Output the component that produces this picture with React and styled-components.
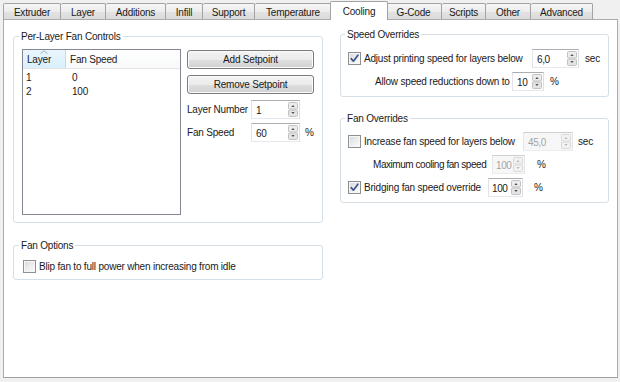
import React from "react";
import styled, { createGlobalStyle, css } from "styled-components";

const GlobalStyle = createGlobalStyle`
  html, body { margin: 0; padding: 0; background: #f0f0f0; }
  body {
    font-family: "Liberation Sans", Arial, sans-serif;
    font-size: 10px;
    letter-spacing: -0.2px;
    color: #1a1a1a;
  }
  * { box-sizing: border-box; }
`;

const Window = styled.div`
  width: 620px;
  height: 382px;
  padding: 0 2px 4px 3px;
  display: flex;
  flex-direction: column;
  background: #f0f0f0;
`;

const TabBar = styled.div`
  flex: none;
  height: 19px;
  display: flex;
  align-items: flex-end;
  position: relative;
  z-index: 1;
`;

const Tab = styled.div`
  flex: none;
  width: ${(p) => p.$w}px;
  height: 16px;
  display: flex;
  align-items: center;
  justify-content: center;
  padding-top: 2px;
  border: 1px solid #a3a3a3;
  border-bottom: none;
  border-left-width: 0;
  border-radius: 2px 2px 0 0;
  background: linear-gradient(#f6f6f6, #ececec 50%, #e2e2e2 51%, #dcdcdc);
  white-space: nowrap;
  &:first-child { border-left-width: 1px; }
  ${(p) =>
    p.$active &&
    css`
      width: ${p.$w + 4}px;
      height: 19px;
      margin: 0 -2px -1px;
      padding-top: 0;
      border-left-width: 1px;
      background: #fff;
      position: relative;
      z-index: 2;
    `}
`;

const Pane = styled.div`
  flex: 1;
  background: #fff;
  border: 1px solid #acacac;
  border-bottom-color: #a0a0a0;
  display: grid;
  grid-template-columns: 310px 269px;
  column-gap: 17px;
  align-items: start;
  padding: 0 8px 0 9px;
`;

const Column = styled.div`
  display: flex;
  flex-direction: column;
  gap: ${(p) => p.$gap}px;
  padding-top: ${(p) => p.$top}px;
`;

const Group = styled.fieldset`
  margin: 0;
  min-width: 0;
  border: 1px solid #d5dfe5;
  border-radius: 3px;
  padding: ${(p) => p.$pt}px 0 ${(p) => p.$pb}px 0;
`;

const Legend = styled.legend`
  margin-left: ${(p) => p.$x}px;
  padding: 0 2px;
  height: 11px;
  line-height: 11px;
`;

const FanControlsBody = styled.div`
  display: grid;
  grid-template-columns: 159px 127px;
  column-gap: 6px;
  padding: 0 8px;
`;

const List = styled.div`
  height: 166px;
  border: 1px solid #828790;
  background: #fff;
  display: flex;
  flex-direction: column;
`;

const HeaderRow = styled.div`
  display: grid;
  grid-template-columns: 43px 1fr;
  height: 19px;
  border-bottom: 1px solid #e5e5e5;
`;

const HeaderCell = styled.div`
  position: relative;
  display: flex;
  align-items: center;
  padding-left: 4px;
  padding-top: 1px;
  ${(p) =>
    p.$sorted
      ? css`
          background: linear-gradient(#eaf6fd, #d9effc);
          border-right: 1px solid #c0dcef;
        `
      : css`
          background: linear-gradient(#ffffff, #f8f9fa);
        `}
`;

const SortMark = styled.svg`
  position: absolute;
  top: 0;
  left: 50%;
  margin-left: -4px;
`;

const ListRows = styled.div`
  padding-top: 1px;
`;

const ListRow = styled.div`
  display: grid;
  grid-template-columns: 43px 1fr;
  height: 14px;
  align-items: center;
`;

const ListCell = styled.div`
  padding-left: ${(p) => p.$pl}px;
`;

const Controls = styled.div`
  display: flex;
  flex-direction: column;
  padding-top: 1px;
`;

const Button = styled.button`
  height: 19px;
  width: 100%;
  margin: 0 0 6px;
  padding: 0;
  border: 1px solid #7a7a7a;
  border-radius: 3px;
  font: inherit;
  letter-spacing: inherit;
  color: inherit;
  background: linear-gradient(#f3f3f3 0%, #ebebeb 50%, #dedede 51%, #d2d2d2 100%);
  box-shadow: inset 0 0 0 1px #fbfbfb;
`;

const FormGrid = styled.div`
  display: grid;
  grid-template-columns: 64px 49px auto;
  row-gap: 4px;
  align-items: center;
`;

const Unit = styled.span`
  margin-left: ${(p) => p.$gap}px;
`;

const Text = styled.span`
  letter-spacing: ${(p) => (p.$tight ? "-0.45px" : "inherit")};
`;

const Spin = styled.div`
  width: ${(p) => p.$w}px;
  height: 19px;
  display: flex;
  align-items: stretch;
  padding: 1px;
  border: 1px solid;
  border-color: ${(p) => (p.$disabled ? "#cfcfcf #e6e6e6 #ececec #e6e6e6" : "#abadb3 #dbdfe6 #e3e9ef #e2e3ea")};
  background: ${(p) => (p.$disabled ? "#f7f7f7" : "#fff")};
  color: ${(p) => (p.$disabled ? "#a3a3a3" : "inherit")};
`;

const SpinValue = styled.span`
  flex: 1;
  display: flex;
  align-items: center;
  padding-left: ${(p) => p.$pl}px;
  padding-top: 1px;
  letter-spacing: -0.4px;
`;

const SpinArrows = ({ disabled }) => (
  <svg width="10" height="15" viewBox="0 0 10 15">
    <rect x="0.5" y="0.5" width="9" height="6.5" rx="1" fill={disabled ? "#f2f2f2" : "#ececec"} stroke={disabled ? "#dadada" : "#c2c2c2"} />
    <rect x="0.5" y="8" width="9" height="6.5" rx="1" fill={disabled ? "#f2f2f2" : "#e4e4e4"} stroke={disabled ? "#dadada" : "#c2c2c2"} />
    <polygon points="3.3,5 5,3 6.7,5" fill={disabled ? "#bcbcbc" : "#555"} />
    <polygon points="3.3,10 5,12 6.7,10" fill={disabled ? "#bcbcbc" : "#555"} />
  </svg>
);

const SpinBox = ({ value, w, disabled, pl = 3 }) => (
  <Spin $w={w} $disabled={disabled}>
    <SpinValue $pl={pl}>{value}</SpinValue>
    <SpinArrows disabled={disabled} />
  </Spin>
);

const Box = styled.span`
  width: 13px;
  height: 13px;
  flex: none;
  border: 1px solid #8e8f8f;
  display: inline-flex;
  align-items: center;
  justify-content: center;
  background: linear-gradient(135deg, #d6d8dc 0%, #eef0f2 60%, #fcfcfc 100%);
  box-shadow: inset 0 0 0 1px #f6f6f6;
`;

const CheckBox = ({ checked }) => (
  <Box>
    {checked && (
      <svg width="11" height="11" viewBox="0 0 11 11">
        <path d="M2.2 5.6 L4.4 8.2 L8.9 2.2" fill="none" stroke="#3c5488" strokeWidth="1.7" strokeLinecap="round" strokeLinejoin="round" />
      </svg>
    )}
  </Box>
);

const CheckLabel = styled.span`
  display: flex;
  align-items: center;
  gap: 3px;
  white-space: nowrap;
`;

const Rows = styled.div`
  display: flex;
  flex-direction: column;
  gap: 4px;
`;

const OptionRow = styled.div`
  display: grid;
  grid-template-columns: ${(p) => p.$label}px auto auto;
  justify-content: start;
  align-items: center;
  height: 19px;
  padding-left: ${(p) => p.$indent}px;
  white-space: nowrap;
`;

const TABS = [
  ["Extruder", 58],
  ["Layer", 45],
  ["Additions", 60],
  ["Infill", 37],
  ["Support", 52],
  ["Temperature", 77],
  ["Cooling", 54],
  ["G-Code", 56],
  ["Scripts", 44],
  ["Other", 45],
  ["Advanced", 62],
];

const ROWS = [
  ["1", "0"],
  ["2", "100"],
];

export default function App() {
  return (
    <>
      <GlobalStyle />
      <Window>
        <TabBar>
          {TABS.map(([name, w]) => (
            <Tab key={name} $w={w} $active={name === "Cooling"}>
              {name}
            </Tab>
          ))}
        </TabBar>
        <Pane>
          <Column $top={11} $gap={17}>
            <Group $pt={7} $pb={7}>
              <Legend $x={5}>Per-Layer Fan Controls</Legend>
              <FanControlsBody>
                <List>
                  <HeaderRow>
                    <HeaderCell $sorted>
                      <SortMark width="8" height="4" viewBox="0 0 8 4">
                        <polyline points="0.5,3.5 4,0.8 7.5,3.5" fill="none" stroke="#9bb2c6" strokeWidth="1" />
                      </SortMark>
                      Layer
                    </HeaderCell>
                    <HeaderCell>Fan Speed</HeaderCell>
                  </HeaderRow>
                  <ListRows>
                    {ROWS.map(([layer, speed]) => (
                      <ListRow key={layer}>
                        <ListCell $pl={3}>{layer}</ListCell>
                        <ListCell $pl={6}>{speed}</ListCell>
                      </ListRow>
                    ))}
                  </ListRows>
                </List>
                <Controls>
                  <Button>Add Setpoint</Button>
                  <Button>Remove Setpoint</Button>
                  <FormGrid>
                    <span>Layer Number</span>
                    <SpinBox value="1" w={49} />
                    <span />
                    <span>Fan Speed</span>
                    <SpinBox value="60" w={49} />
                    <Unit $gap={5}>%</Unit>
                  </FormGrid>
                </Controls>
              </FanControlsBody>
            </Group>
            <Group $pt={6} $pb={3}>
              <Legend $x={5}>Fan Options</Legend>
              <OptionRow $indent={9} $label={290}>
                <CheckLabel>
                  <CheckBox />
                  Blip fan to full power when increasing from idle
                </CheckLabel>
              </OptionRow>
            </Group>
          </Column>
          <Column $top={9} $gap={16}>
            <Group $pt={9} $pb={5}>
              <Legend $x={4}>Speed Overrides</Legend>
              <Rows>
                <OptionRow $indent={7} $label={184}>
                  <CheckLabel>
                    <CheckBox checked />
                    Adjust printing speed for layers below
                  </CheckLabel>
                  <SpinBox value="6,0" w={47} />
                  <Unit $gap={6}>sec</Unit>
                </OptionRow>
                <OptionRow $indent={34} $label={137}>
                  <Text>Allow speed reductions down to</Text>
                  <SpinBox value="10" w={32} />
                  <Unit $gap={6}>%</Unit>
                </OptionRow>
              </Rows>
            </Group>
            <Group $pt={8} $pb={5}>
              <Legend $x={4}>Fan Overrides</Legend>
              <Rows>
                <OptionRow $indent={7} $label={175}>
                  <CheckLabel>
                    <CheckBox />
                    Increase fan speed for layers below
                  </CheckLabel>
                  <SpinBox value="45,0" w={50} disabled />
                  <Unit $gap={5}>sec</Unit>
                </OptionRow>
                <OptionRow $indent={32} $label={119}>
                  <Text $tight>Maximum cooling fan speed</Text>
                  <SpinBox value="100" w={33} pl={2} disabled />
                  <Unit $gap={12}>%</Unit>
                </OptionRow>
                <OptionRow $indent={7} $label={140}>
                  <CheckLabel>
                    <CheckBox checked />
                    Bridging fan speed override
                  </CheckLabel>
                  <SpinBox value="100" w={35} pl={2} />
                  <Unit $gap={11}>%</Unit>
                </OptionRow>
              </Rows>
            </Group>
          </Column>
        </Pane>
      </Window>
    </>
  );
}
